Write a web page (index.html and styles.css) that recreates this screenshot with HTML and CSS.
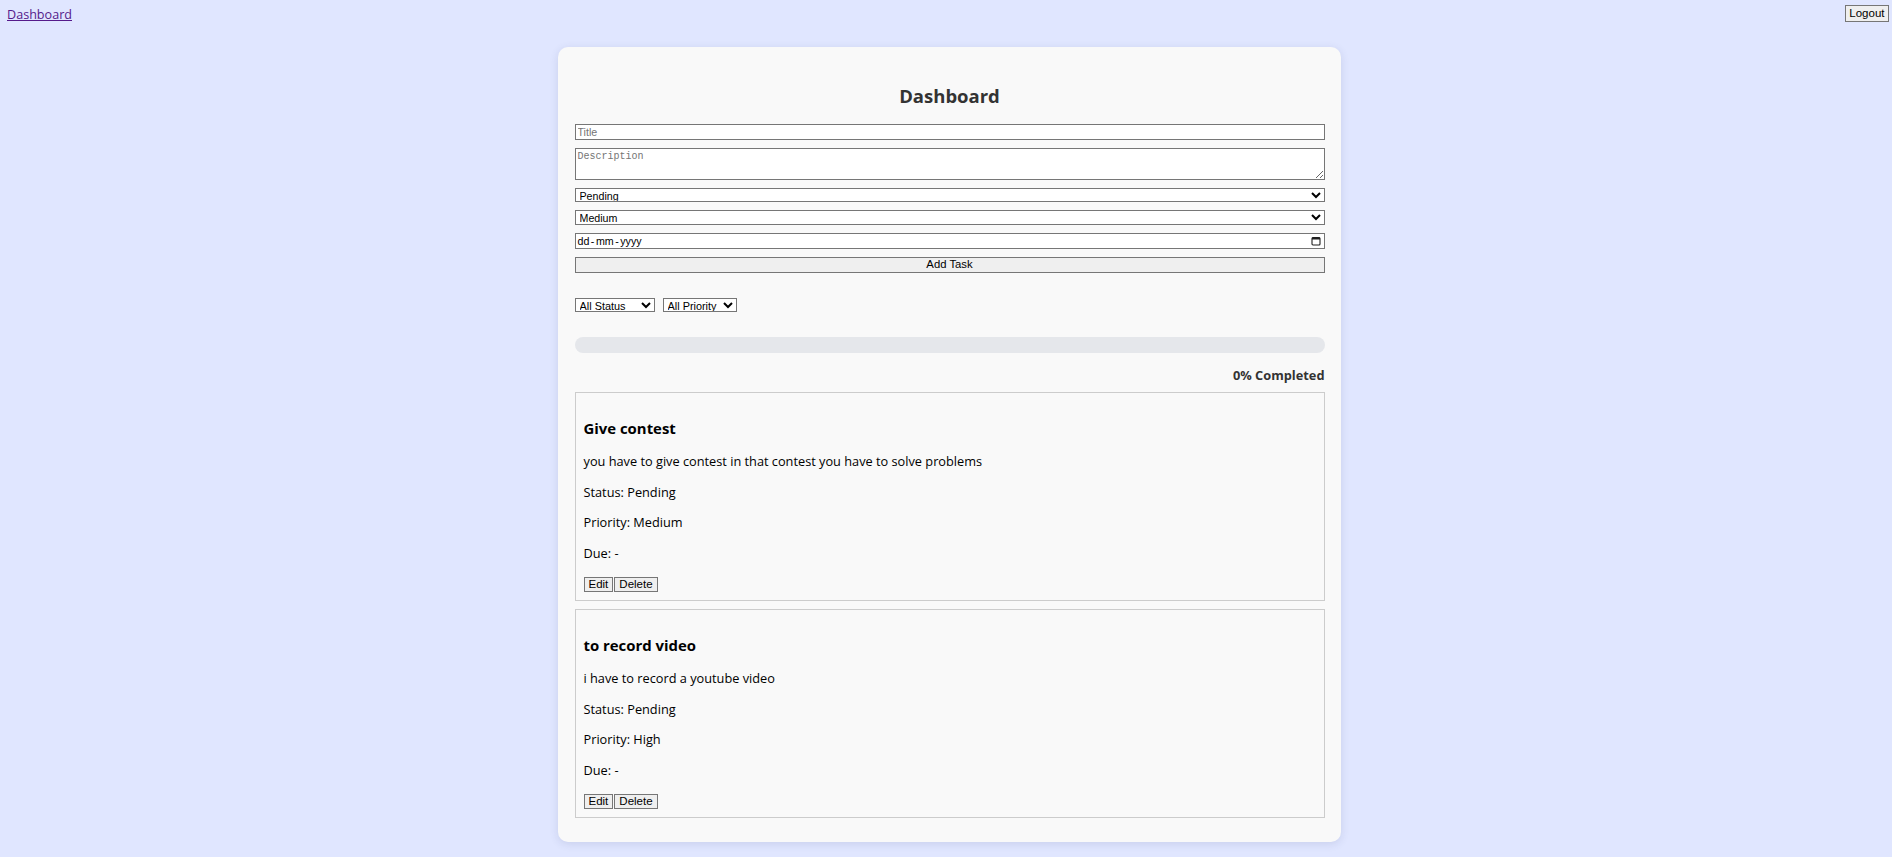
FILE: index.html
```html
<!DOCTYPE html>
<html lang="en">
<head>
<meta charset="utf-8">
<title>Dashboard</title>
<link rel="stylesheet" href="styles.css">
</head>
<body>
<header class="topbar">
  <a class="nav-link" href="#">Dashboard</a>
  <button class="ctl-btn logout" type="button">Logout</button>
</header>
<main class="page">
  <section class="panel">
    <h2 class="panel-title">Dashboard</h2>
    <form class="task-form">
      <input class="field field-input" type="text" placeholder="Title">
      <textarea class="field field-area" placeholder="Description"></textarea>
      <select class="field field-select">
        <option>Pending</option>
        <option>In Progress</option>
        <option>Completed</option>
      </select>
      <select class="field field-select">
        <option>Low</option>
        <option selected>Medium</option>
        <option>High</option>
      </select>
      <div class="field date-field">
        <span class="date-text">dd<span class="sep">-</span>mm<span class="sep">-</span>yyyy</span>
        <svg class="cal-icon" width="10" height="10" viewBox="0 0 10 10" aria-hidden="true">
          <rect x="1" y="1.5" width="8" height="7.5" rx="1" fill="none" stroke="#1f1f1f" stroke-width="1.1"/>
          <rect x="1" y="1.5" width="8" height="2" fill="#1f1f1f"/>
        </svg>
      </div>
      <button class="field ctl-btn add-btn" type="button">Add Task</button>
    </form>

    <div class="filters">
      <select class="filter-select filter-status">
        <option>All Status</option>
        <option>Pending</option>
        <option>In Progress</option>
        <option>Completed</option>
      </select>
      <select class="filter-select filter-priority">
        <option>All Priority</option>
        <option>Low</option>
        <option>Medium</option>
        <option>High</option>
      </select>
    </div>

    <div class="progress"><div class="progress-fill" style="width:0%"></div></div>
    <p class="progress-label">0% Completed</p>

    <div class="task-list">
      <article class="task">
        <h3 class="task-title">Give contest</h3>
        <p class="task-line">you have to give contest in that contest you have to solve problems</p>
        <p class="task-line">Status: Pending</p>
        <p class="task-line">Priority: Medium</p>
        <p class="task-line">Due: -</p>
        <div class="task-actions">
          <button class="ctl-btn small-btn" type="button">Edit</button>
          <button class="ctl-btn small-btn" type="button">Delete</button>
        </div>
      </article>
      <article class="task">
        <h3 class="task-title">to record video</h3>
        <p class="task-line">i have to record a youtube video</p>
        <p class="task-line">Status: Pending</p>
        <p class="task-line">Priority: High</p>
        <p class="task-line">Due: -</p>
        <div class="task-actions">
          <button class="ctl-btn small-btn" type="button">Edit</button>
          <button class="ctl-btn small-btn" type="button">Delete</button>
        </div>
      </article>
    </div>
  </section>
</main>
</body>
</html>
```

FILE: styles.css
```css
* {
  box-sizing: border-box;
}

body {
  margin: 0;
  background: #e0e6ff;
  font-family: "Open Sans", "Noto Sans", sans-serif;
  font-size: 12.75px;
  color: #000;
}

.topbar {
  display: flex;
  justify-content: space-between;
  align-items: flex-start;
  padding: 5px 3px 0 7px;
}

.nav-link {
  color: #551a8b;
  text-decoration: underline;
  font-size: 12.6px;
  line-height: 19px;
}

.ctl-btn {
  font-family: "Liberation Sans", Arial, sans-serif;
  font-size: 11.5px;
  color: #000;
  background: #efefef;
  border: 1px solid #767676;
  border-radius: 0;
  margin: 0;
  padding: 0 3px;
  line-height: 1;
}

.logout {
  height: 17px;
  padding: 0 3.5px;
}

.page {
  display: flex;
  justify-content: center;
  padding: 23px 0 12px 6px;
}

.panel {
  width: 783px;
  padding: 16px 16px 24px 17px;
  background: #f9f9f9;
  border-radius: 10px;
  box-shadow: 0 2px 8px rgba(60, 70, 120, 0.14);
}

.panel-title {
  margin: 20px 0 15px;
  text-align: center;
  color: #333;
  font-size: 18.5px;
  font-weight: 700;
  line-height: 26px;
}

.task-form {
  display: flex;
  flex-direction: column;
  gap: 8px;
}

.field {
  display: block;
  width: 100%;
  margin: 0;
  border: 1px solid #767676;
  border-radius: 0;
  background: #fff;
  font-family: "Liberation Sans", Arial, sans-serif;
  font-size: 10.67px;
  color: #000;
}

.field-input {
  height: 16px;
  padding: 0 2px;
}

.field-input::placeholder {
  color: #757575;
}

.field-area {
  height: 31.5px;
  padding: 2px 2px;
  font-family: "Liberation Mono", "DejaVu Sans Mono", monospace;
  font-size: 10px;
  resize: vertical;
}

.field-area::placeholder {
  color: #757575;
}

.field-select {
  height: 14.5px;
  padding: 0;
  line-height: 12px;
}

.date-field {
  height: 16px;
  padding: 0 3px 0 2px;
  display: flex;
  align-items: center;
  justify-content: space-between;
}

.date-text {
  line-height: 12px;
}

.sep {
  margin: 0 1.5px;
}

.cal-icon {
  display: block;
  flex: none;
}

.add-btn {
  height: 16px;
  background: #efefef;
  text-align: center;
  padding: 0;
  font-size: 11.3px;
}

.filters {
  display: flex;
  gap: 8px;
  margin-top: 25.5px;
}

.filter-select {
  height: 14px;
  margin: 0;
  padding: 0;
  border: 1px solid #767676;
  border-radius: 0;
  background: #fff;
  font-family: "Liberation Sans", Arial, sans-serif;
  font-size: 10.9px;
  line-height: 12px;
  color: #000;
}

.filter-status {
  width: 80px;
}

.filter-priority {
  width: 74px;
}

.progress {
  margin-top: 25px;
  height: 16px;
  border-radius: 8px;
  background: #e5e7eb;
  overflow: hidden;
}

.progress-fill {
  height: 100%;
  background: #4f46e5;
}

.progress-label {
  margin: 12.5px 0 8.5px;
  text-align: right;
  color: #333;
  font-size: 12.8px;
  font-weight: 700;
  line-height: 18px;
}

.task-list {
  display: flex;
  flex-direction: column;
  gap: 8px;
}

.task {
  border: 1px solid #ccc;
  padding: 8px;
}

.task-title {
  margin: 15px 0 0;
  font-size: 14.9px;
  font-weight: 700;
  line-height: 24px;
}

.task-line {
  margin: 10.6px 0 0;
  line-height: 20px;
}

.task-title + .task-line {
  margin-top: 11px;
}

.task-actions {
  display: flex;
  gap: 1px;
  margin-top: 13.8px;
}

.small-btn {
  height: 15.5px;
  padding: 0 4px;
}
```
